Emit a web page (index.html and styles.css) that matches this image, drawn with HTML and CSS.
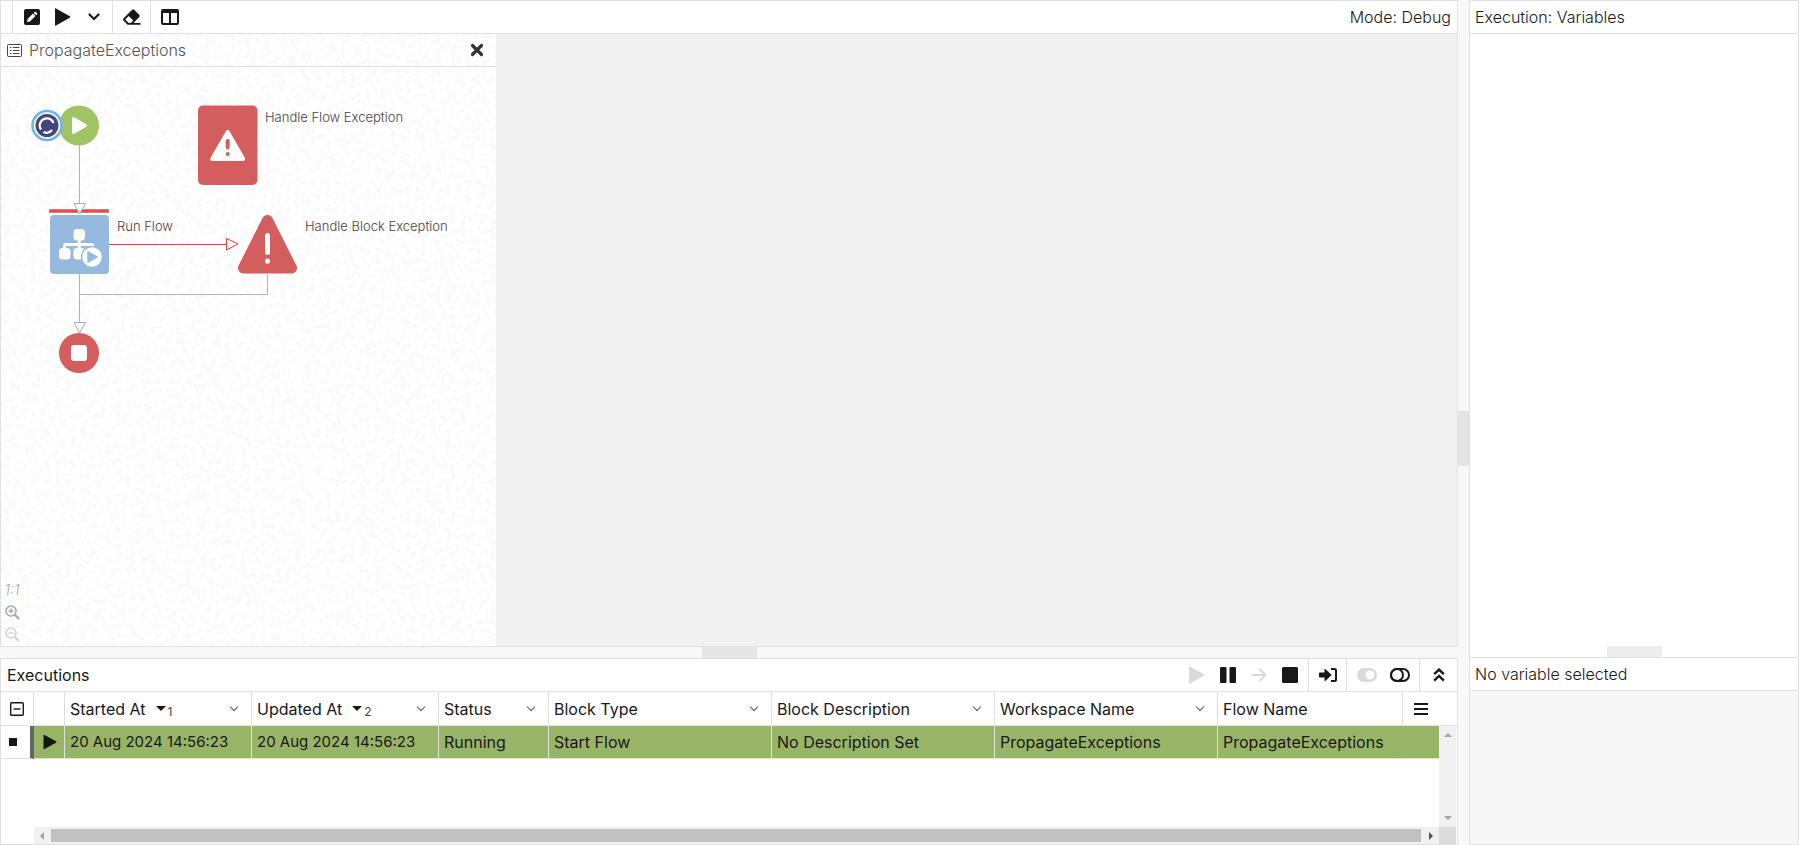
FILE: index.html
```html
<!DOCTYPE html>
<html lang="en">
<head>
<meta charset="utf-8">
<title>Execution: PropagateExceptions</title>
<link rel="stylesheet" href="styles.css">
</head>
<body>
<div class="app">
  <main class="main">
    <section class="editor panel">
      <header class="bar">
        <span class="grip"></span>
        <div class="group">
          <button class="tool" aria-label="Edit"><svg width="16" height="16" viewBox="0 0 16 16"><rect width="16" height="16" rx="2" fill="#181818"/><path d="M3 13l.6-3L9 4.600l2.400 2.400L6 12.400zM9.700 3.900l.9-.9q.6-.5 1.200 0l1.200 1.200q.5.600 0 1.200l-.9.900z" fill="#fff"/></svg></button>
          <button class="tool" aria-label="Run"><svg width="17" height="18" viewBox="0 0 17 18"><path d="M1 1.200Q1 0 2 .500L15.800 8.300Q16.800 9 15.800 9.700L2 17.500Q1 18 1 16.800z" fill="#181818"/></svg></button>
          <button class="tool" aria-label="Run options"><svg width="12" height="8" viewBox="0 0 12 8"><path d="M1.500 1.500L6 6l4.500-4.500" fill="none" stroke="#181818" stroke-width="2.200" stroke-linecap="round"/></svg></button>
        </div>
        <div class="group">
          <button class="tool" aria-label="Clear"><svg width="20" height="18" viewBox="0 0 20 18"><path d="M1.600 10.300L10 1.900q1.200-1.100 2.400 0l4.800 4.800q1.200 1.200 0 2.400L11.500 15H18.500v1.800H5.600L1.600 12.700q-1.100-1.200 0-2.400zM3.200 11.500L6.600 15H8.800l2.500-2.500L6.700 8z" fill="#181818" fill-rule="evenodd"/></svg></button>
        </div>
        <div class="group group-last">
          <button class="tool" aria-label="Columns"><svg width="18" height="16" viewBox="0 0 18 16"><path d="M2 0h14q2 0 2 2v12q0 2-2 2H2q-2 0-2-2V2q0-2 2-2zM2 4v10h6V4zM10 4v10h6V4z" fill="#181818" fill-rule="evenodd"/></svg></button>
        </div>
        <span class="mode">Mode: Debug</span>
      </header>
      <div class="workspace">
        <div class="flow">
          <svg class="texture" width="100%" height="100%" aria-hidden="true">
            <filter id="paper" x="0" y="0" width="100%" height="100%"><feTurbulence type="fractalNoise" baseFrequency=".2" numOctaves="2" seed="4"/><feColorMatrix values="0 0 0 0 .9  0 0 0 0 .9  0 0 0 0 .9  9 0 0 0 -4.200"/></filter>
            <rect width="100%" height="100%" filter="url(#paper)" opacity=".4"/>
          </svg>
          <header class="tab">
            <svg width="15" height="13" viewBox="0 0 15 13"><rect x=".5" y=".5" width="14" height="12" rx="1" fill="none" stroke="#444"/><path d="M3 3.500h1.500M3 6.500h1.500M3 9.500h1.500M6 3.500h6.500M6 6.500h6.500M6 9.500h6.500" stroke="#444" stroke-width="1.200"/></svg>
            <span class="tab-name">PropagateExceptions</span>
            <button class="close" aria-label="Close"><svg width="14" height="14" viewBox="0 0 14 14"><path d="M2.500 2.500l9 9M11.500 2.500l-9 9" stroke="#333" stroke-width="3.200" stroke-linecap="round"/></svg></button>
          </header>
          <div class="canvas">
            <svg class="diagram" width="495" height="340" viewBox="1 67 495 340">
              <g fill="none" stroke="#b4b4b4">
                <path d="M79.500 145v58M79.500 274v48M267.500 274v20.500H79.500"/>
                <path d="M109 244.500H226" stroke="#f03a3a"/>
              </g>
              <rect x="49.500" y="209.500" width="59" height="3" fill="#f44" stroke="#b88"/>
              <g fill="#fff" stroke="#aaa">
                <path d="M74 203.500h11.500L79.500 214z"/>
                <path d="M74 322.500h11.500L79.500 333z"/>
                <path d="M226.500 238.500v11.500L238 244z" stroke="#f03a3a"/>
              </g>
              <circle cx="79" cy="125.500" r="20" fill="#a0c464"/>
              <path d="M73.500 118.500v14l12-7z" fill="#fff" stroke="#fff" stroke-width="3" stroke-linejoin="round"/>
              <circle cx="47" cy="125.500" r="14.500" fill="#fff" stroke="#6db4f0" stroke-width="2.600"/>
              <circle cx="47" cy="125.500" r="11.500" fill="#46457c"/>
              <path d="M53.500 123a7 7 0 0 0-12.500-1.500a7 7 0 0 0 0 8M43.500 132a7 7 0 0 0 8.500-2" fill="none" stroke="#fff" stroke-width="2.200"/>
              <rect x="198" y="105.500" width="59.500" height="79.500" rx="5" fill="#d45d5e"/>
              <path d="M227.700 132l15.500 27h-31z" fill="#fff" stroke="#fff" stroke-width="4" stroke-linejoin="round"/>
              <path d="M227.700 141v6.500M227.700 154v.1" stroke="#d45d5e" stroke-width="4" stroke-linecap="round"/>
              <rect x="50" y="215" width="59" height="59" rx="4" fill="#95bade"/>
              <g fill="#fff">
                <rect x="73.500" y="229" width="11.500" height="11.500" rx="3.500"/>
                <rect x="59" y="248" width="11.500" height="11.500" rx="3.500"/>
                <rect x="73.500" y="248" width="11.500" height="11.500" rx="3.500"/>
                <path d="M64.500 249v-3q0-1.500 1.500-1.500h26l2 3M79.300 239v10" fill="none" stroke="#fff" stroke-width="3"/>
                <circle cx="92" cy="257" r="10.500" stroke="#95bade" stroke-width="1.500"/>
              </g>
              <path d="M88 252v10l9-5z" fill="#95bade" stroke="#95bade" stroke-width="1.500" stroke-linejoin="round"/>
              <path d="M267.500 220.500l24 47.500h-48z" fill="#d45d5e" stroke="#d45d5e" stroke-width="11" stroke-linejoin="round"/>
              <path d="M267.500 235.500v17M267.500 261v.2" stroke="#fff" stroke-width="5" stroke-linecap="round"/>
              <circle cx="79" cy="353" r="20" fill="#d45d5e"/>
              <rect x="71" y="345" width="16" height="16" rx="3" fill="#fff"/>
              <g class="label">
                <text x="265" y="122">Handle Flow Exception</text>
                <text x="117" y="231">Run Flow</text>
                <text x="305" y="231">Handle Block Exception</text>
              </g>
            </svg>
            <div class="zoom">
              <button class="zoom-btn zoom-reset">1:1</button>
              <button class="zoom-btn" aria-label="Zoom in"><svg width="15" height="15" viewBox="0 0 15 15" fill="none" stroke="#a8a8a8"><circle cx="6" cy="6" r="5" stroke-width="1.600"/><path d="M3.500 6h5M6 3.500v5" stroke-width="1.300"/><path d="M9.800 9.800l4.200 4.200" stroke-width="2.200"/></svg></button>
              <button class="zoom-btn" aria-label="Zoom out" disabled><svg width="15" height="15" viewBox="0 0 15 15" fill="none" stroke="#d4d4d4"><circle cx="6" cy="6" r="5" stroke-width="1.600"/><path d="M3.500 6h5" stroke-width="1.300"/><path d="M9.800 9.800l4.200 4.200" stroke-width="2.200"/></svg></button>
            </div>
          </div>
        </div>
      </div>
    </section>
    <div class="split-h"><span class="handle-h"></span></div>
    <section class="executions panel">
      <header class="bar">
        <h2 class="title">Executions</h2>
        <div class="group push">
          <button class="tool" aria-label="Resume" disabled><svg width="17" height="18" viewBox="0 0 17 18"><path d="M1 1.200Q1 0 2 .500L15.800 8.300Q16.800 9 15.800 9.700L2 17.500Q1 18 1 16.800z" fill="#dadada"/></svg></button>
          <button class="tool" aria-label="Pause"><svg width="16" height="16" viewBox="0 0 16 16" fill="#181818"><rect width="6.500" height="16" rx="1"/><rect x="9.500" width="6.500" height="16" rx="1"/></svg></button>
          <button class="tool" aria-label="Step" disabled><svg width="16" height="16" viewBox="0 0 16 16"><path d="M1 8h13M8.500 2l6 6-6 6" fill="none" stroke="#dadada" stroke-width="2"/></svg></button>
          <button class="tool" aria-label="Stop"><svg width="16" height="16" viewBox="0 0 16 16"><rect width="16" height="16" rx="1.500" fill="#181818"/></svg></button>
        </div>
        <div class="group">
          <button class="tool" aria-label="Step into"><svg width="18" height="14" viewBox="0 0 18 14"><path d="M1 4.500h4.500V1.200q.2-.6.800-.2l5.900 5.500q.5.500 0 1L6.300 13q-.6.400-.8-.2V9.500H1q-1 0-1-1v-3q0-1 1-1z" fill="#181818"/><path d="M12 1h3.500Q17 1 17 2.500v9q0 1.500-1.500 1.500H12" fill="none" stroke="#181818" stroke-width="2"/></svg></button>
        </div>
        <div class="group">
          <button class="tool tool-wide" aria-label="Enable breakpoints" disabled><svg width="20" height="14" viewBox="0 0 20 14"><rect width="20" height="14" rx="7" fill="#dadada"/><circle cx="13" cy="7" r="4.500" fill="#fff"/></svg></button>
          <button class="tool tool-wide" aria-label="Disable breakpoints"><svg width="20" height="14" viewBox="0 0 20 14" fill="none" stroke="#181818" stroke-width="2"><rect x="1" y="1" width="18" height="12" rx="6"/><circle cx="7" cy="7" r="6"/></svg></button>
        </div>
        <div class="group group-last">
          <button class="tool" aria-label="Collapse"><svg width="12" height="14" viewBox="0 0 12 14"><path d="M1.200 6.200L6 1.600l4.800 4.600M1.200 12.600L6 8l4.800 4.600" fill="none" stroke="#181818" stroke-width="2.400"/></svg></button>
        </div>
      </header>
      <div class="grid">
        <table class="table">
          <colgroup><col class="c-tree"><col class="c-icon"><col class="c-date"><col class="c-date"><col class="c-status"><col class="c-text"><col class="c-text"><col class="c-text"><col><col class="c-menu"></colgroup>
          <thead>
            <tr>
              <th><button class="mini" aria-label="Collapse all"><svg width="14" height="14" viewBox="0 0 14 14" fill="none" stroke="#181818"><rect x=".7" y=".7" width="12.600" height="12.600" rx="1" stroke-width="1.400"/><path d="M3.500 7h7" stroke-width="1.400"/></svg></button></th>
              <th></th>
              <th><div class="head">Started At <span class="sort">1</span><i class="drop"></i></div></th>
              <th><div class="head">Updated At <span class="sort">2</span><i class="drop"></i></div></th>
              <th><div class="head">Status<i class="drop"></i></div></th>
              <th><div class="head">Block Type<i class="drop"></i></div></th>
              <th><div class="head">Block Description<i class="drop"></i></div></th>
              <th><div class="head">Workspace Name<i class="drop"></i></div></th>
              <th><div class="head">Flow Name</div></th>
              <th><button class="mini" aria-label="Column menu"><svg width="14" height="12" viewBox="0 0 14 12"><path d="M0 1h14M0 6h14M0 11h14" stroke="#181818" stroke-width="2"/></svg></button></th>
            </tr>
          </thead>
          <tbody>
            <tr>
              <td class="tree"><span class="node"></span></td>
              <td class="state"><svg width="14" height="16" viewBox="0 0 14 16"><path d="M.500 1.500Q.500.300 1.500.900l11.500 6.300q1 .8 0 1.600L1.500 15.100q-1 .6-1-.6z" fill="#14180e"/></svg></td>
              <td class="date">20 Aug 2024 14:56:23</td>
              <td class="date">20 Aug 2024 14:56:23</td>
              <td>Running</td>
              <td>Start Flow</td>
              <td>No Description Set</td>
              <td>PropagateExceptions</td>
              <td>PropagateExceptions</td>
              <td></td>
            </tr>
          </tbody>
        </table>
        <div class="vscroll"><i class="arrow up"></i><i class="arrow down"></i></div>
        <div class="hscroll"><i class="arrow left"></i><span class="thumb"></span><i class="arrow right"></i></div>
      </div>
    </section>
  </main>
  <div class="split-v"><span class="handle-v"></span></div>
  <aside class="side">
    <section class="variables">
      <header class="bar"><h2 class="title light">Execution: Variables</h2></header>
      <div class="split-side"><span class="handle-h pale"></span></div>
    </section>
    <section class="detail">
      <header class="bar"><h2 class="title light">No variable selected</h2></header>
      <div class="empty"></div>
    </section>
  </aside>
</div>
</body>
</html>
```
FILE: styles.css
```css
* { box-sizing: border-box; }

body {
  margin: 0;
  background: #f8f8f8;
  color: #181818;
  font: 16px/20px Inter, "Liberation Sans", sans-serif;
}

button {
  display: inline-flex;
  align-items: center;
  justify-content: center;
  padding: 0;
  border: 0;
  background: none;
  color: inherit;
  font: inherit;
}

svg { display: block; flex: none; }

.app { display: flex; height: 100vh; }
.main { flex: 1; min-width: 0; display: flex; flex-direction: column; }
.panel { background: #fff; border: 1px solid #e0e0e0; }
.editor { flex: 1; min-height: 0; display: flex; flex-direction: column; }
.executions { height: 187px; display: flex; flex-direction: column; }

.bar {
  flex: none;
  display: flex;
  align-items: center;
  height: 33px;
  border-bottom: 1px solid #e0e0e0;
  background: #fff;
}
.grip { width: 12px; height: 100%; border-right: 1px solid #e0e0e0; }
.group { display: flex; height: 100%; padding: 0 3px; border-right: 1px solid #e0e0e0; }
.group-last { border-right: 0; }
.push { margin-left: auto; }
.tool { width: 31px; height: 100%; }
.tool-wide { width: 33px; }
.mode { margin-left: auto; padding-right: 6px; font-weight: 300; }
.title { margin: 0; padding-left: 6px; font-size: 16px; font-weight: 400; }
.light { padding-left: 5px; font-weight: 300; }

.workspace { flex: 1; min-height: 0; display: flex; background: #f1f1f1; }
.flow { position: relative; width: 495px; display: flex; flex-direction: column; background: #fff; }
.texture { position: absolute; inset: 0; }
.tab {
  position: relative;
  flex: none;
  display: flex;
  align-items: center;
  gap: 7px;
  height: 33px;
  padding: 0 12px 0 6px;
  border-bottom: 1px solid #e0e0e0;
}
.tab-name { color: #555; font-weight: 300; }
.close { margin-left: auto; }
.canvas { position: relative; flex: 1; min-height: 0; overflow: hidden; }
.label { fill: #444; font-size: 13px; font-weight: 300; }

.zoom { position: absolute; left: 2px; bottom: 1px; display: flex; flex-direction: column; }
.zoom-btn { width: 18px; height: 22px; }
.zoom-reset { color: #aaa; font-size: 14px; font-style: italic; font-weight: 300; }

.split-h { height: 11px; display: flex; justify-content: center; }
.split-v {
  width: 11px;
  display: flex;
  flex-direction: column;
  justify-content: center;
  padding-top: 32px;
}
.handle-h { width: 55px; height: 11px; background: #e6e6e6; }
.handle-v { width: 11px; height: 55px; background: #e4e4e4; }
.pale { background: #ededed; }

.grid { position: relative; flex: 1; min-height: 0; }
.table { width: 100%; table-layout: fixed; border-collapse: separate; border-spacing: 0; }
.c-tree { width: 33px; }
.c-icon { width: 31px; }
.c-date { width: 187px; }
.c-status { width: 110px; }
.c-text { width: 223px; }
.c-menu { width: 54px; }
.table th, .table td {
  padding: 0 0 0 5px;
  border-right: 1px solid #e0e0e0;
  border-bottom: 1px solid #e0e0e0;
  font-weight: 400;
  text-align: left;
  white-space: nowrap;
}
.table th { height: 34px; }
.table td { height: 33px; background: #98b467; }
.table th:last-child, .table td:last-child { border-right: 0; }
.table th:first-child { padding-left: 9px; }
.table th:last-child { padding-left: 11px; }
.table td.tree { padding-left: 8px; border-right: 4px solid #666; background: #fff; }
.table td.state { padding-left: 9px; }
.table td.date { font-size: 15px; }
.table td:nth-last-child(2) { border-right-color: #98b467; }
.mini { display: flex; }
.node { display: block; width: 8px; height: 8px; background: #181818; }
.head { display: flex; align-items: center; padding-right: 14px; }
.sort {
  display: inline-flex;
  align-items: center;
  margin-left: 10px;
  padding-top: 6px;
  color: #444;
  font-size: 12px;
  line-height: 14px;
}
.sort::before {
  content: "";
  margin: 0 2px 6px 0;
  border: 5px solid transparent;
  border-top-color: #181818;
  border-bottom: 0;
}
.drop {
  width: 6px;
  height: 6px;
  margin: 0 0 3px auto;
  border: solid #555;
  border-width: 0 1px 1px 0;
  transform: rotate(45deg);
}

.vscroll {
  position: absolute;
  top: 34px;
  right: 0;
  bottom: 17px;
  width: 18px;
  display: flex;
  flex-direction: column;
  align-items: center;
  justify-content: space-between;
  padding: 7px 0;
  border-right: 1px solid #fff;
  background: #f1f1f1;
}
.hscroll {
  position: absolute;
  left: 33px;
  right: 1px;
  bottom: 0;
  height: 17px;
  display: flex;
  align-items: center;
  padding-left: 6px;
  border-right: 17px solid #dcdcdc;
  background: #f1f1f1;
}
.thumb { flex: 1; height: 13px; margin: 0 8px 0 7px; background: #c1c1c1; }
.arrow { width: 0; height: 0; border: 4px solid transparent; }
.up { border-top: 0; border-bottom-color: #a3a3a3; }
.down { border-bottom: 0; border-top-color: #a3a3a3; }
.left { border-left: 0; border-right-color: #a3a3a3; }
.right { margin-right: 6px; border-right: 0; border-left-color: #505050; }

.side {
  width: 330px;
  display: flex;
  flex-direction: column;
  border: 1px solid #e0e0e0;
  background: #fff;
}
.variables { flex: 1; min-height: 0; display: flex; flex-direction: column; }
.split-side { display: flex; justify-content: center; margin-top: auto; }
.detail { height: 187px; display: flex; flex-direction: column; border-top: 1px solid #e0e0e0; }
.empty { flex: 1; background: #f7f7f7; }
```
